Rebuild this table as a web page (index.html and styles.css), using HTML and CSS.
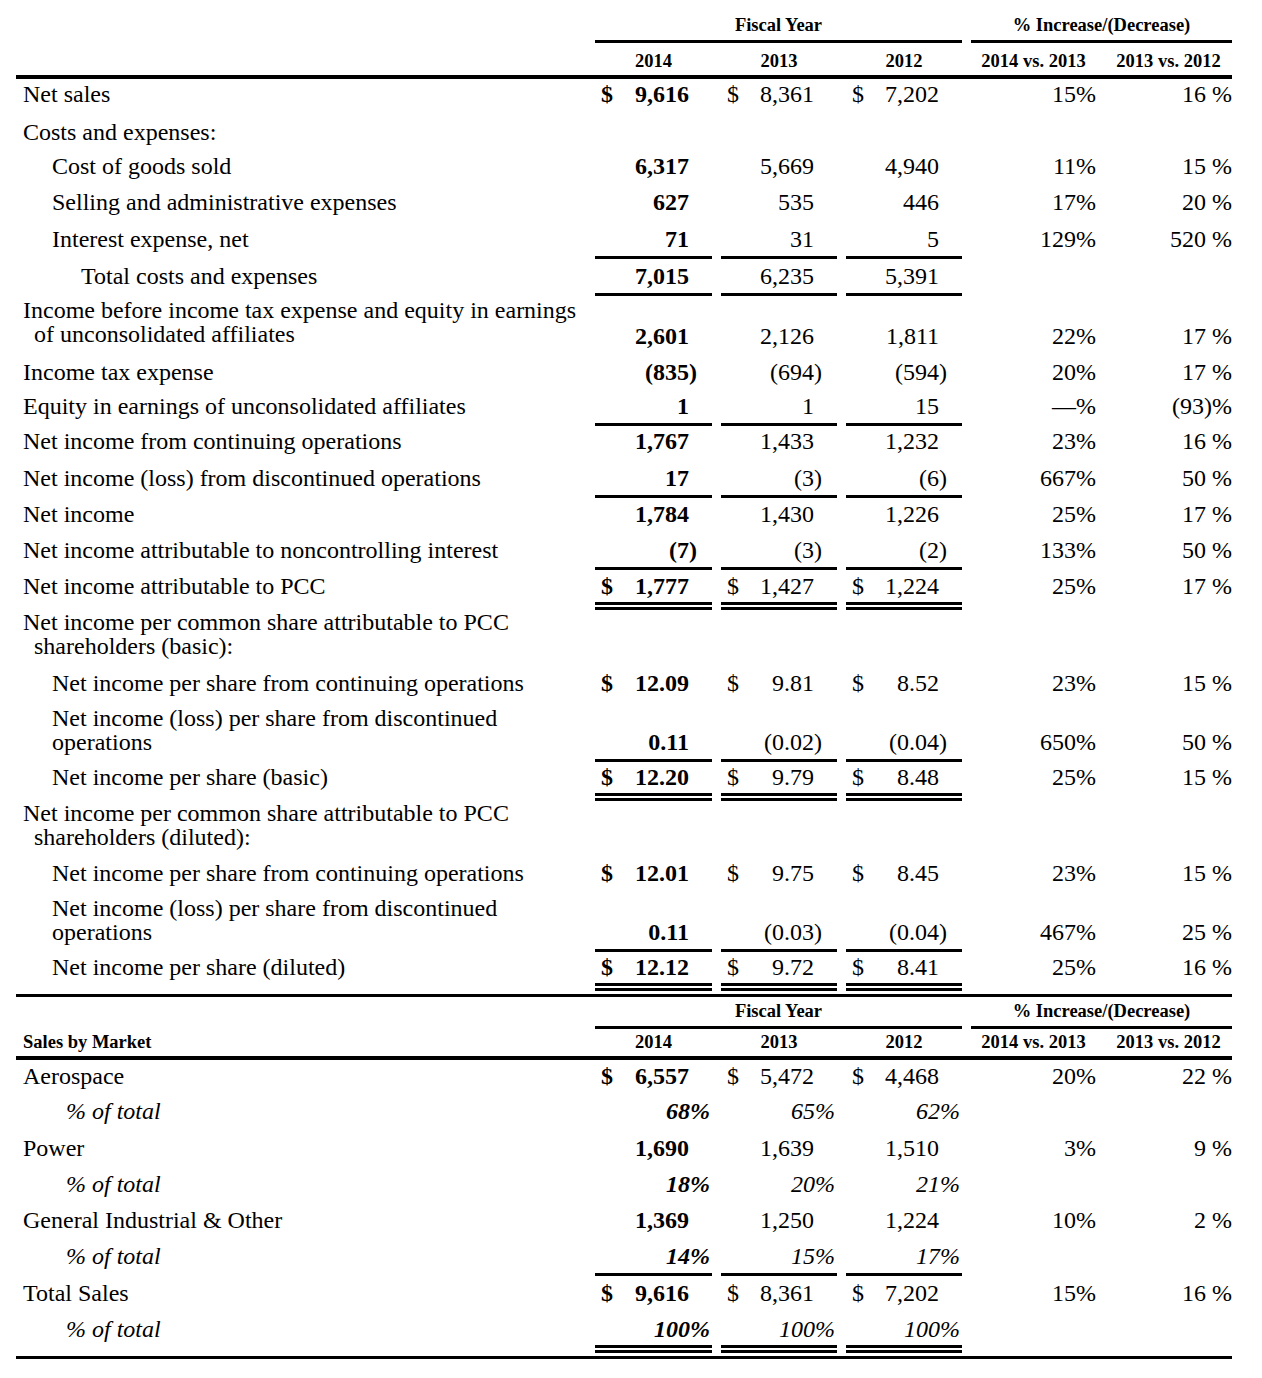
FILE: index.html
```html
<!DOCTYPE html>
<html lang="en">
<head>
<meta charset="utf-8">
<title>Fiscal Year Results</title>
<link rel="stylesheet" href="styles.css">
</head>
<body>
<div class="sheet">
  <div class="row hdr"><div></div><div class="grp fy">Fiscal Year</div><div class="grp pi">% Increase/(Decrease)</div></div>
  <div class="row yrs"><div></div><div>2014</div><div>2013</div><div>2012</div><div>2014 vs. 2013</div><div>2013 vs. 2012</div></div>

  <div class="row h35"><div class="lbl">Net sales</div><div class="v b"><span class="cur">$</span><span class="n">9,616</span></div><div class="v"><span class="cur">$</span><span class="n">8,361</span></div><div class="v"><span class="cur">$</span><span class="n">7,202</span></div><div class="p">15%</div><div class="p">16 %</div></div>
  <div class="row h38"><div class="lbl">Costs and expenses:</div><div></div><div></div><div></div><div></div><div></div></div>
  <div class="row h34"><div class="lbl l1">Cost of goods sold</div><div class="v b"><span class="n">6,317</span></div><div class="v"><span class="n">5,669</span></div><div class="v"><span class="n">4,940</span></div><div class="p">11%</div><div class="p">15 %</div></div>
  <div class="row h36"><div class="lbl l1">Selling and administrative expenses</div><div class="v b"><span class="n">627</span></div><div class="v"><span class="n">535</span></div><div class="v"><span class="n">446</span></div><div class="p">17%</div><div class="p">20 %</div></div>
  <div class="row h37"><div class="lbl l1">Interest expense, net</div><div class="v b u"><span class="n">71</span></div><div class="v u"><span class="n">31</span></div><div class="v u"><span class="n">5</span></div><div class="p">129%</div><div class="p">520 %</div></div>
  <div class="row h37"><div class="lbl l2">Total costs and expenses</div><div class="v b u"><span class="n">7,015</span></div><div class="v u"><span class="n">6,235</span></div><div class="v u"><span class="n">5,391</span></div><div class="p"></div><div class="p"></div></div>
  <div class="row h60"><div class="lbl hang"><span class="txt">Income before income tax expense and equity in earnings<br>of unconsolidated affiliates</span></div><div class="v b"><span class="n">2,601</span></div><div class="v"><span class="n">2,126</span></div><div class="v"><span class="n">1,811</span></div><div class="p">22%</div><div class="p">17 %</div></div>
  <div class="row h36"><div class="lbl">Income tax expense</div><div class="v b"><span class="n neg">(835)</span></div><div class="v"><span class="n neg">(694)</span></div><div class="v"><span class="n neg">(594)</span></div><div class="p">20%</div><div class="p">17 %</div></div>
  <div class="row h34"><div class="lbl">Equity in earnings of unconsolidated affiliates</div><div class="v b u"><span class="n">1</span></div><div class="v u"><span class="n">1</span></div><div class="v u"><span class="n">15</span></div><div class="p">—%</div><div class="p">(93)%</div></div>
  <div class="row h35"><div class="lbl">Net income from continuing operations</div><div class="v b"><span class="n">1,767</span></div><div class="v"><span class="n">1,433</span></div><div class="v"><span class="n">1,232</span></div><div class="p">23%</div><div class="p">16 %</div></div>
  <div class="row h37"><div class="lbl">Net income (loss) from discontinued operations</div><div class="v b u"><span class="n">17</span></div><div class="v u"><span class="n neg">(3)</span></div><div class="v u"><span class="n neg">(6)</span></div><div class="p">667%</div><div class="p">50 %</div></div>
  <div class="row h36"><div class="lbl">Net income</div><div class="v b"><span class="n">1,784</span></div><div class="v"><span class="n">1,430</span></div><div class="v"><span class="n">1,226</span></div><div class="p">25%</div><div class="p">17 %</div></div>
  <div class="row h36"><div class="lbl">Net income attributable to noncontrolling interest</div><div class="v b u"><span class="n neg">(7)</span></div><div class="v u"><span class="n neg">(3)</span></div><div class="v u"><span class="n neg">(2)</span></div><div class="p">133%</div><div class="p">50 %</div></div>
  <div class="row h40 dbl"><div class="lbl">Net income attributable to PCC</div><div class="v b dd"><span class="cur">$</span><span class="n">1,777</span></div><div class="v dd"><span class="cur">$</span><span class="n">1,427</span></div><div class="v dd"><span class="cur">$</span><span class="n">1,224</span></div><div class="p">25%</div><div class="p">17 %</div></div>
  <div class="row h55"><div class="lbl hang"><span class="txt">Net income per common share attributable to PCC<br>shareholders (basic):</span></div><div></div><div></div><div></div><div></div><div></div></div>
  <div class="row h38"><div class="lbl l1">Net income per share from continuing operations</div><div class="v b"><span class="cur">$</span><span class="n">12.09</span></div><div class="v"><span class="cur">$</span><span class="n">9.81</span></div><div class="v"><span class="cur">$</span><span class="n">8.52</span></div><div class="p">23%</div><div class="p">15 %</div></div>
  <div class="row h59"><div class="lbl l1"><span class="txt">Net income (loss) per share from discontinued<br>operations</span></div><div class="v b u"><span class="n">0.11</span></div><div class="v u"><span class="n neg">(0.02)</span></div><div class="v u"><span class="n neg">(0.04)</span></div><div class="p">650%</div><div class="p">50 %</div></div>
  <div class="row h39 dbl"><div class="lbl l1">Net income per share (basic)</div><div class="v b dd"><span class="cur">$</span><span class="n">12.20</span></div><div class="v dd"><span class="cur">$</span><span class="n">9.79</span></div><div class="v dd"><span class="cur">$</span><span class="n">8.48</span></div><div class="p">25%</div><div class="p">15 %</div></div>
  <div class="row h55"><div class="lbl hang"><span class="txt">Net income per common share attributable to PCC<br>shareholders (diluted):</span></div><div></div><div></div><div></div><div></div><div></div></div>
  <div class="row h37"><div class="lbl l1">Net income per share from continuing operations</div><div class="v b"><span class="cur">$</span><span class="n">12.01</span></div><div class="v"><span class="cur">$</span><span class="n">9.75</span></div><div class="v"><span class="cur">$</span><span class="n">8.45</span></div><div class="p">23%</div><div class="p">15 %</div></div>
  <div class="row h59"><div class="lbl l1"><span class="txt">Net income (loss) per share from discontinued<br>operations</span></div><div class="v b u"><span class="n">0.11</span></div><div class="v u"><span class="n neg">(0.03)</span></div><div class="v u"><span class="n neg">(0.04)</span></div><div class="p">467%</div><div class="p">25 %</div></div>
  <div class="row h39 dbl"><div class="lbl l1">Net income per share (diluted)</div><div class="v b dd"><span class="cur">$</span><span class="n">12.12</span></div><div class="v dd"><span class="cur">$</span><span class="n">9.72</span></div><div class="v dd"><span class="cur">$</span><span class="n">8.41</span></div><div class="p">25%</div><div class="p">16 %</div></div>

  <div class="rule"></div>

  <div class="row hdr s2"><div></div><div class="grp fy">Fiscal Year</div><div class="grp pi">% Increase/(Decrease)</div></div>
  <div class="row yrs s2"><div class="mk">Sales by Market</div><div>2014</div><div>2013</div><div>2012</div><div>2014 vs. 2013</div><div>2013 vs. 2012</div></div>

  <div class="row h36"><div class="lbl">Aerospace</div><div class="v b"><span class="cur">$</span><span class="n">6,557</span></div><div class="v"><span class="cur">$</span><span class="n">5,472</span></div><div class="v"><span class="cur">$</span><span class="n">4,468</span></div><div class="p">20%</div><div class="p">22 %</div></div>
  <div class="row h35"><div class="lbl share">% of total</div><div class="it b">68%</div><div class="it">65%</div><div class="it">62%</div><div></div><div></div></div>
  <div class="row h37"><div class="lbl">Power</div><div class="v b"><span class="n">1,690</span></div><div class="v"><span class="n">1,639</span></div><div class="v"><span class="n">1,510</span></div><div class="p">3%</div><div class="p">9 %</div></div>
  <div class="row h36"><div class="lbl share">% of total</div><div class="it b">18%</div><div class="it">20%</div><div class="it">21%</div><div></div><div></div></div>
  <div class="row h36"><div class="lbl">General Industrial &amp; Other</div><div class="v b"><span class="n">1,369</span></div><div class="v"><span class="n">1,250</span></div><div class="v"><span class="n">1,224</span></div><div class="p">10%</div><div class="p">2 %</div></div>
  <div class="row h36"><div class="lbl share">% of total</div><div class="it b u">14%</div><div class="it u">15%</div><div class="it u">17%</div><div></div><div></div></div>
  <div class="row h37"><div class="lbl">Total Sales</div><div class="v b"><span class="cur">$</span><span class="n">9,616</span></div><div class="v"><span class="cur">$</span><span class="n">8,361</span></div><div class="v"><span class="cur">$</span><span class="n">7,202</span></div><div class="p">15%</div><div class="p">16 %</div></div>
  <div class="row h40 dbl"><div class="lbl share">% of total</div><div class="it b dd">100%</div><div class="it dd">100%</div><div class="it dd">100%</div><div></div><div></div></div>

  <div class="rule"></div>
</div>
</body>
</html>
```
FILE: styles.css
```css
* {
  box-sizing: border-box;
  margin: 0;
  padding: 0;
}

body {
  margin: 0;
  background: #ffffff;
  color: #000000;
  font-family: "Liberation Serif", "Times New Roman", serif;
  font-size: 24px;
  line-height: 24px;
}

.sheet {
  width: 1216px;
  margin-left: 16px;
}

.row {
  display: grid;
  grid-template-columns: 570px 117px 116px 116px 125px 127px;
  column-gap: 9px;
}

.row > div {
  display: flex;
  align-items: flex-end;
  padding-bottom: 5px;
  border-bottom: 3px solid transparent;
  white-space: nowrap;
}

.row.dbl > div {
  padding-bottom: 9px;
}

.row.dbl > .dd {
  padding-bottom: 4px;
}

/* row heights */
.h34 { height: 34px; }
.h35 { height: 35px; }
.h36 { height: 36px; }
.h37 { height: 37px; }
.h38 { height: 38px; }
.h39 { height: 39px; }
.h40 { height: 40px; }
.h55 { height: 55px; }
.h59 { height: 59px; }
.h60 { height: 60px; }

/* labels */
.lbl {
  padding-left: 7px;
}

.lbl .txt {
  display: block;
}

.lbl.l1 {
  padding-left: 36px;
}

.lbl.l2 {
  padding-left: 65px;
}

.row > .lbl.hang {
  padding-left: 18px;
  padding-bottom: 7px;
}

.lbl.hang .txt {
  text-indent: -11px;
}

.lbl.share {
  padding-left: 50px;
  font-style: italic;
}

/* value cells */
.v {
  justify-content: space-between;
}

.cur {
  padding-left: 6px;
}

.n {
  margin-left: auto;
  padding-right: 23px;
}

.n.neg {
  padding-right: 15px;
}

.b {
  font-weight: bold;
}

.p {
  justify-content: flex-end;
}

.it {
  justify-content: flex-end;
  font-style: italic;
  padding-right: 2px;
}

.row > .u {
  border-bottom-color: #000000;
}

.row > .dd {
  border-bottom: 8px double #000000;
}

/* header rows */
.hdr {
  height: 43px;
}

.hdr.s2 {
  height: 32px;
}

.hdr > div {
  font-size: 18.5px;
  line-height: 20px;
  font-weight: bold;
  justify-content: center;
}

.row > .grp {
  border-bottom-color: #000000;
}

.fy {
  grid-column: 2 / 5;
}

.pi {
  grid-column: 5 / 7;
}

.yrs {
  height: 36px;
  border-bottom: 4px solid #000000;
}

.yrs.s2 {
  height: 31px;
}

.yrs > div {
  font-size: 18.5px;
  line-height: 20px;
  font-weight: bold;
  justify-content: center;
  padding-bottom: 4px;
  border-bottom: 0;
}

.yrs > .mk {
  justify-content: flex-start;
  padding-left: 7px;
}

.rule {
  height: 3px;
  margin-top: 3px;
  background: #000000;
}
```
